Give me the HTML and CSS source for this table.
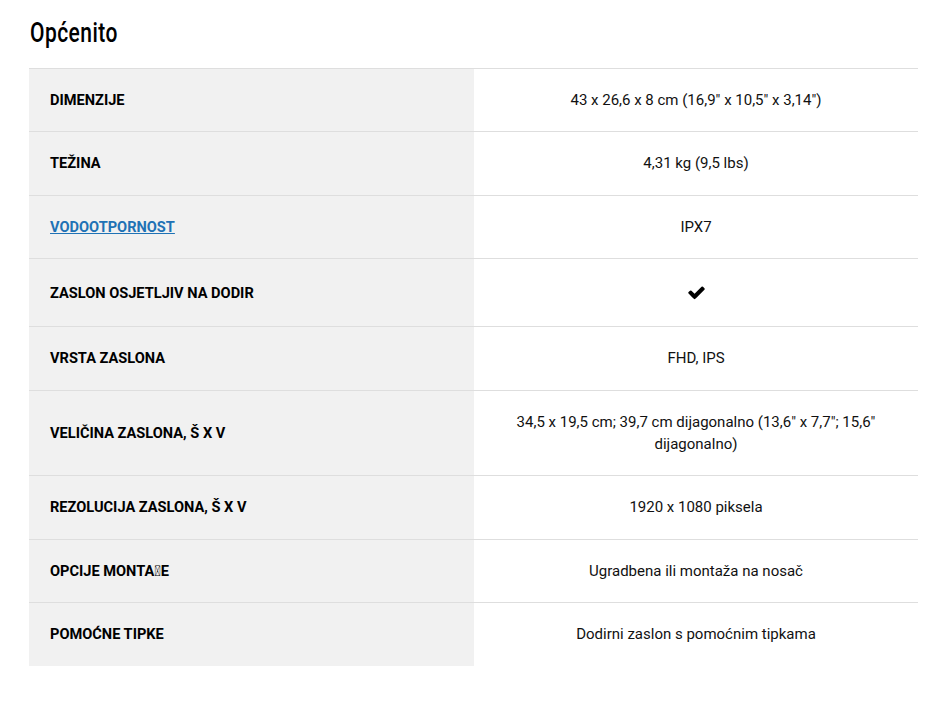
FILE: index.html
```html
<!DOCTYPE html>
<html lang="hr">
<head>
<meta charset="utf-8">
<title>Općenito</title>
<link rel="stylesheet" href="styles.css">
</head>
<body>
<section class="specs">
  <h2 class="specs-title"><span class="title-text">Općenito</span></h2>
  <table class="spec-table">
    <tbody>
      <tr><th>DIMENZIJE</th><td>43 x 26,6 x 8 cm (16,9" x 10,5" x 3,14")</td></tr>
      <tr><th>TEŽINA</th><td>4,31 kg (9,5 lbs)</td></tr>
      <tr><th><a href="#" class="spec-link">VODOOTPORNOST</a></th><td>IPX7</td></tr>
      <tr class="row-icon"><th>ZASLON OSJETLJIV NA DODIR</th><td><span class="check"><svg viewBox="0 0 1792 1792" width="19" height="19" aria-label="da"><path d="M1671 566q0 40-28 68l-724 724-136 136q-28 28-68 28t-68-28l-136-136-362-362q-28-28-28-68t28-68l136-136q28-28 68-28t68 28l294 295 656-657q28-28 68-28t68 28l136 136q28 28 28 68z" fill="#000"/></svg></span></td></tr>
      <tr><th>VRSTA ZASLONA</th><td>FHD, IPS</td></tr>
      <tr><th>VELIČINA ZASLONA, Š X V</th><td>34,5 x 19,5 cm; 39,7 cm dijagonalno (13,6" x 7,7"; 15,6" dijagonalno)</td></tr>
      <tr><th>REZOLUCIJA ZASLONA, Š X V</th><td>1920 x 1080 piksela</td></tr>
      <tr><th>OPCIJE MONTA<span class="tofu">&#xE000;</span>E</th><td>Ugradbena ili montaža na nosač</td></tr>
      <tr class="last"><th>POMOĆNE TIPKE</th><td>Dodirni zaslon s pomoćnim tipkama</td></tr>
    </tbody>
  </table>
</section>
</body>
</html>
```
FILE: styles.css
```css
html, body {
  margin: 0;
  padding: 0;
  background: #fff;
}
body {
  font-family: Roboto, "Noto Sans", Arial, sans-serif;
  color: #111;
}
.specs {
  padding: 14px 32px 0 29px;
}
.specs-title {
  margin: 0 0 0 1px;
  font-family: Roboto, "Noto Sans", sans-serif;
  font-weight: 500;
  font-size: 28px;
  line-height: 38px;
  color: #000;
  height: 54px;
}
.title-text {
  display: inline-block;
  transform: scaleX(0.75);
  transform-origin: left center;
  letter-spacing: 0.6px;
}
.spec-table {
  width: 889px;
  border-collapse: collapse;
  border-top: 1px solid #dedede;
  table-layout: fixed;
}
.spec-table th,
.spec-table td {
  padding: 20px 20px;
  font-size: 15px;
  line-height: 22.4px;
  border-bottom: 1px solid #dedede;
  vertical-align: middle;
}
.spec-table th {
  width: 404px;
  padding-left: 21px;
  background: #f1f1f1;
  text-align: left;
  font-weight: 700;
  font-size: 14.6px;
  color: #000;
}
.spec-table td {
  text-align: center;
  color: #111;
}
.spec-table tr.last th,
.spec-table tr.last td {
  border-bottom: none;
}
.spec-link {
  color: #1f72b5;
  text-decoration: underline;
}
.row-icon th,
.row-icon td {
  height: 27px;
}
.check {
  display: inline-flex;
  align-items: center;
  height: 27px;
  vertical-align: middle;
}
.check svg {
  display: block;
}
.tofu {
  font-weight: 400;
}
```
